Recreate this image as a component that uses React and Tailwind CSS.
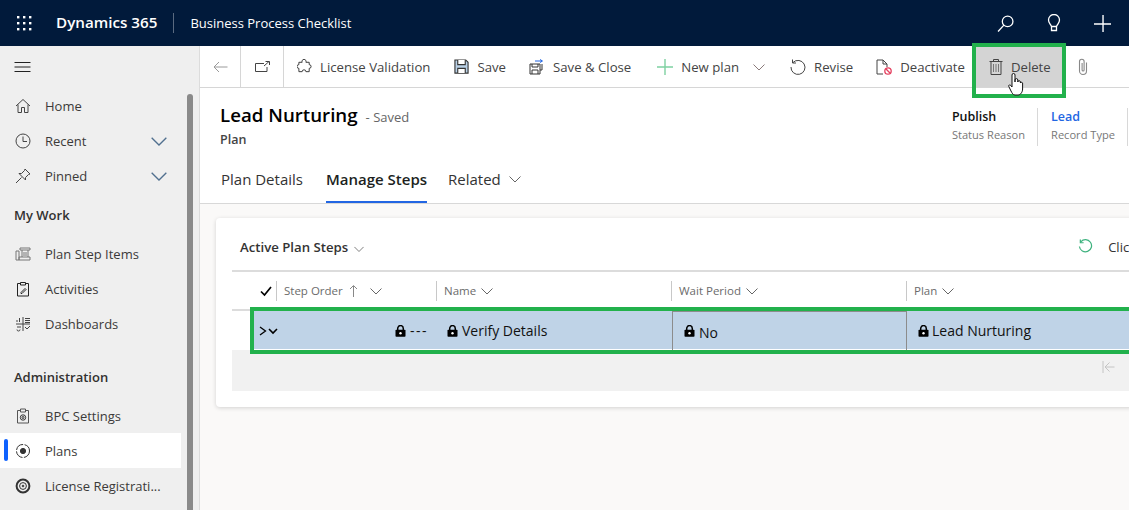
import React from "react";

const S = ({ w = 16, h = 16, vb = "0 0 16 16", c = "#444", sw = 1, children, className = "" }) => (
  <svg width={w} height={h} viewBox={vb} fill="none" stroke={c} strokeWidth={sw} className={"shrink-0 " + className}>{children}</svg>
);
const Chev = ({ w = 12, c = "#666" }) => (
  <S w={w} h={w} vb="0 0 12 12" c={c}><path d="M0.5 3.5 L6 9 L11.5 3.5" /></S>
);
const Lock = () => (
  <svg width="11" height="12" viewBox="0 0 11 12" className="shrink-0">
    <path d="M2.7 5V3.4a2.8 2.8 0 0 1 5.6 0V5" fill="none" stroke="#000" strokeWidth="1.5" />
    <rect x="0.5" y="4.8" width="10" height="7" rx="0.8" fill="#000" />
    <circle cx="5.5" cy="8.2" r="1.2" fill="#fff" />
  </svg>
);

const icons = {
  home: <S><path d="M1 8 L8 1.5 L15 8 M3 6.5V14.5H6.5V9.5H9.5V14.5H13V6.5" /></S>,
  clock: <S><circle cx="8" cy="8" r="7" /><path d="M8 3.5V8.5H12" /></S>,
  pin: <S><path d="M10 1 L15 6 L13.5 6.5 L10.5 9.5 L10.5 12 L4 5.5 L6.5 5.5 L9.5 2.5 Z M6.5 9.5 L1 15" /></S>,
  steps: <S c="#777"><path d="M5 2H15V4H5Z M7 4V11 M13 4V11 M4 11H15V14H4Z M1 5H4V14H1Z M8 7H12M8 9H12" /></S>,
  act: <S c="#222"><path d="M5 2.5H2.5V15H13.5V2.5H11 M5.5 1.5H10.5V4H5.5Z M6 11.5L10 7.5L11 8.5L7 12.5H6Z" /></S>,
  dash: <S c="#444"><path d="M8 1V15 M1 8H15 M2 6V4M4.5 6V2M10 2.5H15M10 4.5H15M10 6.5H15M2 11H6M10 11l2 2 3-3M2 13.5a1.5 1.5 0 1 0 3 0" /></S>,
  bpc: <S c="#333"><path d="M5 2.5H2.5V15H13.5V2.5H11 M5.5 1H10.5V4H5.5Z" stroke="#555" /><circle cx="8" cy="9.5" r="2.7" /><circle cx="8" cy="9.5" r="1" /></S>,
  plans: <S c="#333"><circle cx="8" cy="8" r="6.5" strokeDasharray="9 1.5" /><circle cx="8" cy="8" r="2.6" fill="#333" /></S>,
  lic: <S c="#333" sw="2"><circle cx="8" cy="8" r="6.4" /><circle cx="8" cy="8" r="3.4" strokeWidth="1" /><circle cx="8" cy="8" r="1" fill="#333" strokeWidth="0.5" /></S>,
};

const NavItem = ({ icon, label, chev, active }) => (
  <div className={"relative flex h-[35px] items-center pl-[15px] " + (active ? "bg-white" : "")}>
    {active && <span className="absolute left-[4px] top-[6px] h-[22px] w-[4px] rounded-sm bg-[#0f62fe]" />}
    {icons[icon]}
    <span className="ml-[14px] whitespace-nowrap pt-[2px] text-[13px] text-[#3b3a39]">{label}</span>
    {chev && <span className="ml-auto mr-[14px]"><Chev w={16} c="#51708f" /></span>}
  </div>
);

const Tool = ({ icon, label, className = "" }) => (
  <div className={"flex items-center whitespace-nowrap text-[13.2px] text-[#444] " + className}>
    {icon}
    <span className="ml-[8px] pt-[3px]">{label}</span>
  </div>
);

const Head = ({ label, children, className = "" }) => (
  <div className={"flex h-[20px] items-center border-l border-[#c8c8c8] pl-[7px] text-[11.5px] text-[#6b6b6b] " + className}>
    <span className="whitespace-nowrap">{label}</span>
    {children || <span className="ml-[5px]"><Chev /></span>}
  </div>
);

export default function App() {
  return (
    <div className="flex h-[510px] w-[1129px] flex-col overflow-hidden bg-white" style={{ fontFamily: '"Open Sans", sans-serif' }}>
      <header className="flex h-[46px] shrink-0 items-center bg-[#011a3b] text-white">
        <svg width="16" height="16" viewBox="0 0 16 16" fill="#fff" className="ml-[16px] shrink-0">
          {[1, 7, 13].flatMap((y) => [1, 7, 13].map((x) => <rect key={x + "-" + y} x={x} y={y} width="2.4" height="2.4" />))}
        </svg>
        <span className="ml-[24px] whitespace-nowrap pb-[2px] text-[15.2px] font-semibold">Dynamics 365</span>
        <span className="ml-[16px] h-[20px] w-px bg-[#5a6a80]" />
        <span className="ml-[16px] whitespace-nowrap pt-[2px] text-[13px]">Business Process Checklist</span>
        <div className="ml-auto flex items-center">
          <S w={17} h={17} c="#fff" sw={1.2}><circle cx="10" cy="6" r="5" /><path d="M6.5 9.5 L1 15.5" /></S>
          <span className="ml-[32px]"><S w={16} h={18} vb="0 0 16 18" c="#fff" sw={1.3}><path d="M5.5 12.5C4.5 10 2.5 9 2.5 6a5.5 5.5 0 0 1 11 0c0 3-2 4-3 6.5Z M5.5 12.5V16.5H10.5V12.5" /></S></span>
          <span className="ml-[32px] mr-[18px]"><S w={17} h={17} c="#fff" sw={1.3}><path d="M8.5 0V17M0 8.5H17" /></S></span>
        </div>
      </header>

      <div className="flex min-h-0 flex-1">
        <aside className="flex w-[200px] shrink-0 border-r border-[#dcdcdc] bg-[#efefef]">
          <div className="w-[181px] shrink-0">
            <div className="flex h-[42px] items-center pl-[14px]">
              <S w={17} h={12} vb="0 0 17 12" c="#222"><path d="M0.5 1.5H16.5M0.5 6H16.5M0.5 10.5H16.5" /></S>
            </div>
            <div>
              <NavItem icon="home" label="Home" />
              <NavItem icon="clock" label="Recent" chev />
              <NavItem icon="pin" label="Pinned" chev />
            </div>
            <div className="flex h-[43px] items-center pl-[14px] pt-[2px] text-[13px] font-semibold text-[#323130]">My Work</div>
            <div>
              <NavItem icon="steps" label="Plan Step Items" />
              <NavItem icon="act" label="Activities" />
              <NavItem icon="dash" label="Dashboards" />
            </div>
            <div className="mt-[-17px] box-border flex h-[71px] items-center pb-[1px] pl-[14px] pt-[37px] text-[13px] font-semibold text-[#323130]">Administration</div>
            <div className="mt-[3px]">
              <NavItem icon="bpc" label="BPC Settings" />
              <NavItem icon="plans" label="Plans" active />
              <NavItem icon="lic" label="License Registrati..." />
            </div>
          </div>
          <div className="ml-[6px] mt-[48px] w-[6px] rounded-t-[3px] bg-[#8a8a8a]" />
        </aside>

        <main className="flex min-w-0 flex-1 flex-col bg-[#faf9f8]">
          <div className="relative flex h-[42px] shrink-0 items-stretch border-b border-[#d6d6d6] bg-white">
            <div className="flex w-[41px] items-center justify-center border-r border-[#d6d6d6]">
              <S w={15} h={12} vb="0 0 15 12" c="#9a9a9a"><path d="M14.5 6H1M6 1L1 6L6 11" /></S>
            </div>
            <div className="flex w-[43px] items-center justify-center border-r border-[#d6d6d6]">
              <S w={15} h={11} vb="0 0 15 11" c="#444"><path d="M9 2.5H0.5V10.5H12V6 M9 5L14 0.5M10.5 0.5H14.5V4" /></S>
            </div>
            <Tool className="ml-[13px]" label="License Validation" icon={<S w={15} h={15} c="#333"><path d="M2 3.5H5.5a2.2 2.2 0 1 1 4 0H13V6a2 2 0 1 1 0 4V13.5H9.5a2 2 0 1 0-4 0H2V10a2 2 0 1 1 0-4Z" /></S>} />
            <Tool className="ml-[24px]" label="Save" icon={<S w={15} h={15} c="#333" sw={1.2}><path d="M1 1H12.5L15 3.5V15H1Z" fill="#b9d0e6" /><path d="M4 1V6H12V1 M4 15V10H12V15" fill="#fff" /></S>} />
            <Tool className="ml-[23px]" label="Save & Close" icon={<S w={16} h={16} c="#333"><path d="M1 5H11V15H1Z M3 5V8H9V5 M3 15V11H9V15" /><path d="M6 2H13M11 0.5L13.5 2L11 3.5" stroke="#2266e3" /><path d="M13 5V11H11" /></S>} />
            <Tool className="ml-[26px]" label="New plan" icon={<S w={16} h={16} c="#7ed1a1" sw={1.4}><path d="M8 0V16M0 8H16" /></S>} />
            <span className="ml-[14px] flex items-center"><Chev c="#8a7a7a" /></span>
            <Tool className="ml-[25px]" label="Revise" icon={<S w={16} h={16} c="#444"><path d="M3 3.5A7 7 0 1 1 1 8M2.5 0.5V4H6" /></S>} />
            <Tool className="ml-[23px]" label="Deactivate" icon={<svg width="16" height="16" viewBox="0 0 16 16" fill="none" className="shrink-0"><path d="M7 15H1V1H7L11 5V8M7 1V5H11" stroke="#444" /><circle cx="12" cy="12" r="3.2" stroke="#e4405f" strokeWidth="1.3" /><path d="M9.8 9.8L14.2 14.2" stroke="#e4405f" strokeWidth="1.3" /></svg>} />
            <div className="relative ml-[11px] flex h-[41px] w-[87px] items-center bg-[#d4d4d4] pl-[13px] text-[13.2px] text-[#444]">
              <S w={14} h={16} vb="0 0 14 16" c="#444"><path d="M0.5 2.5H13.5M4.5 2.5V0.5H9.5V2.5M2 2.5V15.5H12V2.5" /><path d="M4.5 5V13M7 5V13M9.5 5V13" stroke="#777" /></S>
              <span className="ml-[8px] pt-[3px]">Delete</span>
              <span className="absolute left-[-4px] right-[-3px] top-[-3px] h-[55px] border-[4px] border-[#22b14c]" />
              <svg width="16" height="24" viewBox="0 0 16 24" className="absolute left-[32px] top-[26px]" fill="#fff" stroke="#111" strokeWidth="1">
                <path d="M4 15V3a1.5 1.5 0 0 1 3 0V10V8a1.4 1.4 0 0 1 2.8 0V10a1.3 1.3 0 0 1 2.6 0V11a1.2 1.2 0 0 1 2.2 0V17c0 3-2 6-4.5 6H7c-2 0-3-2-4-4L0.8 14.5c-.6-1.5 1.2-2.2 2-1Z" />
              </svg>
            </div>
            <span className="ml-[15px] flex items-center">
              <S w={10} h={18} vb="0 0 10 18" c="#888" sw={1.1}><path d="M8.5 4.5V13a3.5 3.5 0 0 1-7 0V3.5a2.3 2.3 0 0 1 4.6 0V12a1 1 0 0 1-2 0V5" /></S>
            </span>
          </div>

          <div className="flex h-[116px] shrink-0 flex-col border-b border-[#d8d8d8] bg-white">
            <div className="flex h-[71px] shrink-0">
              <div className="pl-[20px] pt-[14px]">
                <div className="flex items-baseline whitespace-nowrap">
                  <span className="text-[18.7px] font-semibold leading-[26px] text-black">Lead Nurturing</span>
                  <span className="ml-[8px] text-[13px] text-[#666]">- Saved</span>
                </div>
                <div className="mt-[4px] text-[12.5px] font-semibold leading-[16px] text-[#444]">Plan</div>
              </div>
              <div className="ml-auto flex pt-[20px]">
                <div className="h-[38px] whitespace-nowrap border-r border-[#d8d8d8] pr-[12px]">
                  <div className="text-[12.5px] font-semibold leading-[17px] text-[#111]">Publish</div>
                  <div className="mt-[1px] text-[11.1px] leading-[18px] text-[#777]">Status Reason</div>
                </div>
                <div className="h-[38px] whitespace-nowrap border-r border-[#d8d8d8] pl-[13px] pr-[12px]">
                  <div className="text-[12.5px] font-semibold leading-[17px] text-[#2266e3]">Lead</div>
                  <div className="mt-[1px] text-[11.1px] leading-[18px] text-[#777]">Record Type</div>
                </div>
                <div className="w-[1px]" />
              </div>
            </div>
            <div className="flex h-[44px] items-stretch pl-[21px] text-[15px] text-[#333]">
              <span className="flex items-center whitespace-nowrap pb-[4px]">Plan Details</span>
              <span className="ml-[23px] flex items-center whitespace-nowrap border-b-[2px] border-[#2266e3] pb-[2px] font-semibold text-[#201f1e]">Manage Steps</span>
              <span className="ml-[21px] flex items-center whitespace-nowrap pb-[4px]">Related<span className="ml-[8px]"><Chev /></span></span>
            </div>
          </div>

          <div className="min-h-0 flex-1 pl-[16px] pt-[14px]">
            <div className="w-[960px] rounded-[4px] bg-white px-[16px] pb-[16px] shadow-[0_1px_4px_rgba(0,0,0,0.16)]">
              <div className="flex h-[54px] items-center border-b-2 border-[#dcdcdc] pt-[6px]">
                <span className="ml-[8px] whitespace-nowrap pt-[2px] text-[13.2px] font-semibold text-[#333]">Active Plan Steps</span>
                <span className="ml-[6px] mt-[4px]"><Chev w={10} /></span>
                <span className="mb-[2px] ml-[714px]"><S w={15} h={15} c="#3fb27f" sw={1.3}><path d="M3 3A6.5 6.5 0 1 1 1.5 8M2.5 0.5V4H6" /></S></span>
                <span className="ml-[15px] whitespace-nowrap pt-[2px] text-[13px] text-[#333]">Clic</span>
              </div>
              <div className="grid h-[37px] grid-cols-[44px_160px_235px_235px_1fr] items-center">
                <span className="flex justify-end pr-[4px]"><S w={12} h={12} vb="0 0 12 12" c="#000" sw={1.7}><path d="M1 6.5L4.5 10L11 2" /></S></span>
                <Head label="Step Order">
                  <span className="ml-[6px]"><S w={9} h={12} vb="0 0 9 12" c="#888"><path d="M4.5 12V1M1 4L4.5 0.5L8 4" /></S></span>
                  <span className="ml-[12px]"><Chev /></span>
                </Head>
                <Head label="Name" />
                <Head label="Wait Period" />
                <Head label="Plan" />
              </div>
              <div className="relative border-t-2 border-[#dcdcdc]">
                <div className="ml-[18px] grid h-[39px] grid-cols-[27px_160px_235px_235px_1fr] items-center border-b border-white bg-[#bfd3e7] text-[14px] text-[#111]">
                  <span className="flex items-center pl-[9px]">
                    <S w={8} h={10} vb="0 0 8 10" c="#000" sw={1.3}><path d="M1 1L6.5 5L1 9" /></S>
                    <span className="ml-[1px]"><S w={10} h={10} vb="0 0 10 10" c="#000" sw={1.6}><path d="M1 3L5 7L9 3" /></S></span>
                  </span>
                  <span className="flex items-center justify-end gap-[4px] pr-[9px]"><Lock /><span className="tracking-[1.5px]">---</span></span>
                  <span className="flex items-center gap-[4px] whitespace-nowrap pl-[10px]"><Lock />Verify Details</span>
                  <span className="flex h-[39px] items-center gap-[4px] border-x border-t border-[#8c8c8c] pl-[11px]"><Lock /><span className="pt-[2px]">No</span></span>
                  <span className="flex items-center gap-[3px] whitespace-nowrap pl-[11px]"><Lock />Lead Nurturing</span>
                </div>
                <div className="flex h-[41px] bg-[#f1f1f1] pl-[870px] pt-[11px]">
                  <S w={13} h={12} vb="0 0 13 12" c="#c4c4c4"><path d="M1 0V12M12.5 6H3M7.5 1.5L3 6L7.5 10.5" /></S>
                </div>
                <span className="absolute -top-[4px] left-[18px] right-[-20px] h-[47px] border-[4px] border-[#22b14c]" />
              </div>
            </div>
          </div>
        </main>
      </div>
    </div>
  );
}
